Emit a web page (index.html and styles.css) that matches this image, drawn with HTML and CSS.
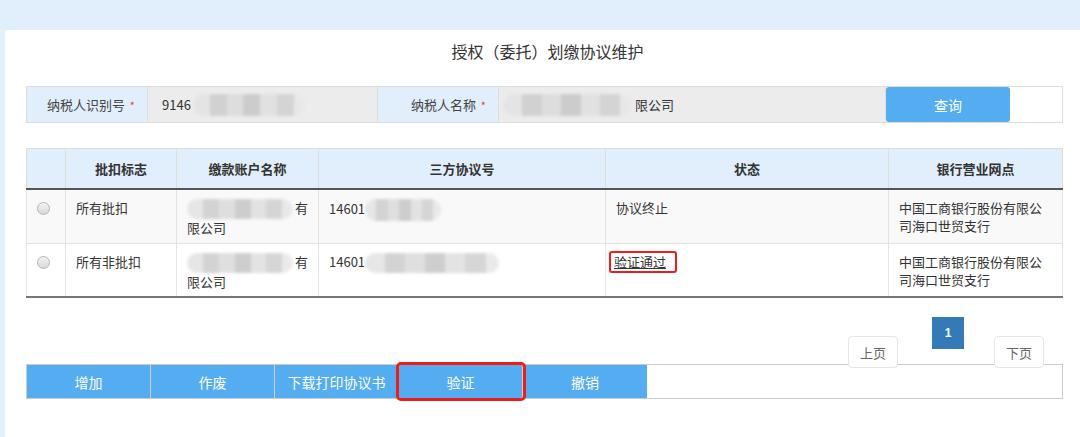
FILE: index.html
```html
<!DOCTYPE html>
<html lang="zh-CN">
  <head>
    <meta charset="UTF-8" />
    <meta name="viewport" content="width=device-width, initial-scale=1.0" />
    <title>授权（委托）划缴协议维护</title>
    <link rel="stylesheet" href="styles.css">
  </head>
  <body>
    <div class="topbar"></div>
    <div class="main">
      <h1 class="title">授权（委托）划缴协议维护</h1>

      <!-- 查询条件 -->
      <div class="search">
        <div class="label">纳税人识别号 <span class="req">*</span></div>
        <div class="field field-id">9146<span class="blur blur-a"></span></div>
        <div class="label">纳税人名称 <span class="req">*</span></div>
        <div class="field field-name"><span class="blur blur-b"></span>限公司</div>
        <button class="btn-query">查询</button>
        <div class="search-rest"></div>
      </div>

      <table class="grid">
        <colgroup>
          <col class="c-radio">
          <col class="c-flag">
          <col class="c-acct">
          <col class="c-no">
          <col class="c-state">
          <col>
        </colgroup>
        <tr>
          <th></th>
          <th>批扣标志</th>
          <th>缴款账户名称</th>
          <th>三方协议号</th>
          <th>状态</th>
          <th>银行营业网点</th>
        </tr>
        <tr class="odd">
          <td class="cell-radio"><span class="radio"></span></td>
          <td>所有批扣</td>
          <td><span class="blur blur-c"></span>有<br>限公司</td>
          <td>14601<span class="blur blur-d"></span></td>
          <td>协议终止</td>
          <td>中国工商银行股份有限公司海口世贸支行</td>
        </tr>
        <tr>
          <td class="cell-radio"><span class="radio"></span></td>
          <td>所有非批扣</td>
          <td><span class="blur blur-c"></span>有<br>限公司</td>
          <td>14601<span class="blur blur-e"></span></td>
          <td><span class="mark">验证通过</span></td>
          <td>中国工商银行股份有限公司海口世贸支行</td>
        </tr>
      </table>

      <div class="pager">
        <button class="page-btn">上页</button>
        <span class="page-cur">1</span>
        <button class="page-btn">下页</button>
      </div>

      <div class="toolbar">
        <button class="tool">增加</button>
        <button class="tool">作废</button>
        <button class="tool">下载打印协议书</button>
        <button class="tool tool-marked">验证</button>
        <button class="tool">撤销</button>
      </div>
    </div>
  </body>
</html>
```

FILE: styles.css
```css
/* page */
body {
  margin: 0;
  padding: 0;
  font-family: "Noto Sans CJK SC", "Liberation Sans", sans-serif;
  font-size: 13px;
  color: #333;
  background-color: #e3f0fd;
}

.topbar {
  height: 30px;
  background-color: #e1effd;
}

.main {
  margin-left: 5px;
  height: 407px;
  padding: 0 17px 0 21px;
  background-color: #fff;
}

.title {
  margin: 0;
  height: 56px;
  line-height: 42px;
  text-align: center;
  font-size: 16px;
  font-weight: normal;
  color: #333;
  padding-left: 6px;
}

/* search row */
.search {
  display: flex;
  height: 35px;
  border: 1px solid #ddd;
}

.label {
  width: 121px;
  box-sizing: border-box;
  padding-right: 12px;
  line-height: 35px;
  text-align: right;
  background-color: #e1effd;
  border-right: 1px solid #ddd;
  color: #444;
}

.req {
  color: #f33;
  font-size: 11px;
  margin-left: 2px;
}

.field {
  display: flex;
  align-items: center;
  background-color: #ececec;
  border-right: 1px solid #ddd;
  padding-left: 14px;
  box-sizing: border-box;
  color: #333;
}

.field-id {
  width: 230px;
}

.field-name {
  width: 387px;
  padding-left: 4px;
}

.btn-query {
  width: 124px;
  margin: 0;
  border: none;
  border-radius: 3px;
  background-color: #54acf1;
  color: #fff;
  font-family: inherit;
  font-size: 14px;
}

.search-rest {
  flex: 1;
  background-color: #fff;
}

/* mosaic blocks over private data */
.blur {
  display: inline-block;
  height: 22px;
  border-radius: 11px;
  vertical-align: middle;
  background:
    linear-gradient(90deg, #e4e4e4 0 15%, #cfcfcf 15% 30%, #dcdcdc 30% 45%, #c9c9c9 45% 60%, #e0e0e0 60% 75%, #d2d2d2 75% 90%, #e8e8e8 90%);
  filter: blur(1.5px);
  opacity: 0.9;
}

.blur-a {
  width: 112px;
  margin-left: 2px;
}

.blur-b {
  width: 130px;
  margin-right: 2px;
}

.blur-c {
  width: 106px;
  height: 20px;
  margin-right: 2px;
}

.blur-d {
  width: 76px;
}

.blur-e {
  width: 134px;
  height: 20px;
}

/* table */
.grid {
  width: 100%;
  margin-top: 25px;
  border-collapse: collapse;
  table-layout: fixed;
}

.c-radio { width: 39px; }
.c-flag  { width: 111px; }
.c-acct  { width: 142px; }
.c-no    { width: 287px; }
.c-state { width: 283px; }

.grid th {
  height: 39px;
  padding: 0;
  background-color: #e1effd;
  font-weight: bold;
  text-align: center;
  border: 1px solid #ddd;
  border-bottom: 2px solid #555;
}

.grid td {
  box-sizing: border-box;
  height: 54px;
  padding: 9px 8px 0 10px;
  line-height: 18px;
  vertical-align: top;
  border-left: 1px solid #e3e3e3;
  border-right: 1px solid #e3e3e3;
  border-bottom: 1px solid #e3e3e3;
  word-break: break-all;
}

.grid tr:last-child td {
  border-bottom: 2px solid #777;
}

.grid tr.odd td {
  background-color: #f9f9f9;
}

.grid td.cell-radio {
  padding: 10px 0 0 0;
  text-align: center;
}

.radio {
  display: inline-block;
  width: 11px;
  height: 11px;
  margin-top: 2px;
  margin-left: -5px;
  border-radius: 50%;
  border: 1px solid #b5b5b5;
  background: linear-gradient(#f4f4f4, #d8d8d8);
}

.mark {
  display: inline-block;
  margin-left: -7px;
  margin-top: -3px;
  padding: 0 9px 0 3px;
  border: 2px solid #f01c1c;
  border-radius: 3px;
  line-height: 18px;
  text-decoration: underline;
}

/* pagination */
.pager {
  position: relative;
  z-index: 1;
  display: flex;
  justify-content: flex-end;
  align-items: flex-end;
  height: 51px;
  margin-top: 19px;
  margin-right: 19px;
  margin-bottom: -4px;
}

.page-btn {
  width: 50px;
  height: 32px;
  margin: 0;
  padding: 0;
  border: 1px solid #e6e6e6;
  border-radius: 4px;
  background-color: #fff;
  color: #666;
  font-family: inherit;
  font-size: 13px;
}

.page-cur {
  align-self: flex-start;
  width: 32px;
  height: 32px;
  margin: 0 30px 0 34px;
  line-height: 32px;
  text-align: center;
  background-color: #337ab7;
  color: #fff;
  font-family: "Liberation Sans", sans-serif;
  font-weight: bold;
  font-size: 12px;
}

/* toolbar */
.toolbar {
  display: flex;
  height: 33px;
  border: 1px solid #ccc;
}

.tool {
  width: 124px;
  margin: 0;
  padding: 0;
  border: none;
  border-right: 1px solid #d0d0d0;
  background-color: #54acf1;
  color: #fff;
  font-family: inherit;
  font-size: 14px;
}

.tool:nth-child(5) {
  border-right: none;
}

.tool-marked {
  outline: 3px solid #f01c1c;
  outline-offset: 0;
  border-radius: 2px;
  position: relative;
  z-index: 1;
}
```
